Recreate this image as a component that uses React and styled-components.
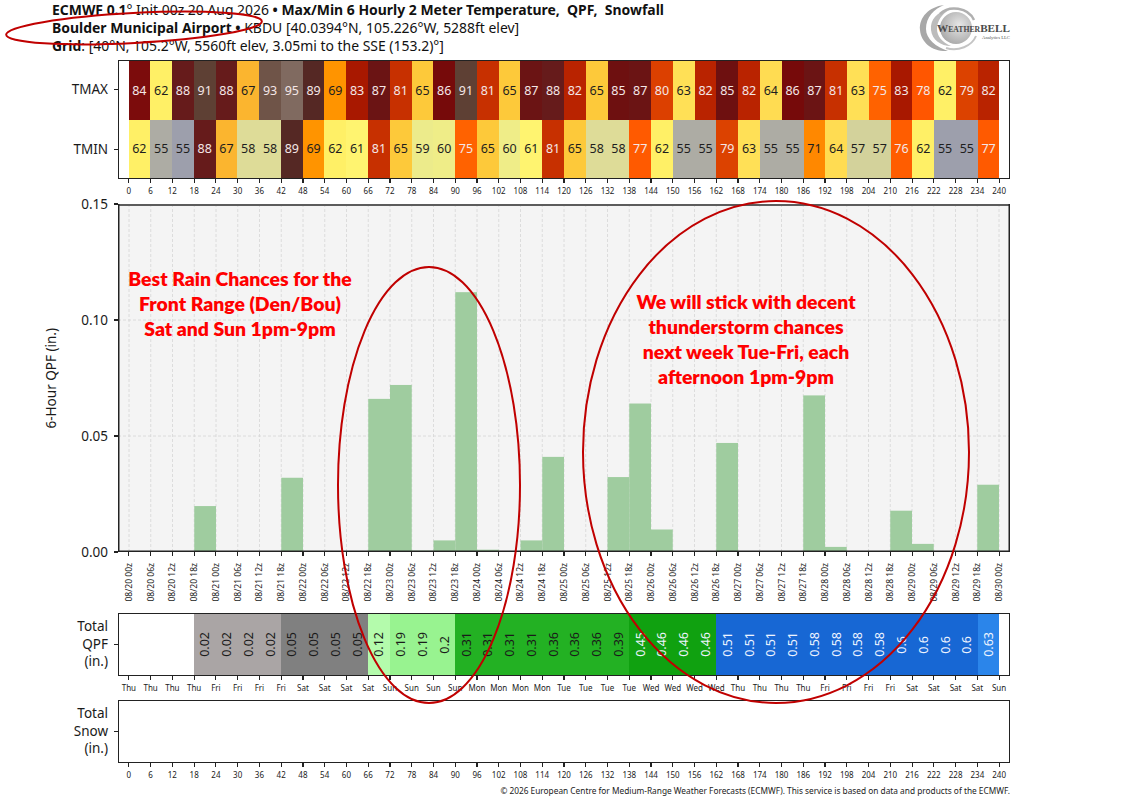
import React from "react";
import styled, { createGlobalStyle } from "styled-components";

const TICKS = Array.from({ length: 41 }, (_, i) => i * 6);
const DAYS = ["Thu", "Fri", "Sat", "Sun", "Mon", "Tue", "Wed"];

const TMAX = [84, 62, 88, 91, 88, 67, 93, 95, 89, 69, 83, 87, 81, 65, 86, 91, 81, 65, 87, 88, 82, 65, 85, 87, 80, 63, 82, 85, 82, 64, 86, 87, 81, 63, 75, 83, 78, 62, 79, 82];
const TMIN = [62, 55, 55, 88, 67, 58, 58, 89, 69, 62, 61, 81, 65, 59, 60, 75, 65, 60, 61, 81, 65, 58, 58, 77, 62, 55, 55, 79, 63, 55, 55, 71, 64, 57, 57, 76, 62, 55, 55, 77];
const COOL_55 = [2, 37, 38];

const QPF6 = { 3: 0.0198, 7: 0.032, 11: 0.066, 12: 0.072, 13: 0.0006, 14: 0.005, 15: 0.112, 16: 0.001, 18: 0.005, 19: 0.041, 22: 0.0323, 23: 0.064, 24: 0.0097, 27: 0.047, 31: 0.0675, 32: 0.0022, 35: 0.0178, 36: 0.0035, 39: 0.029 };

const TOTAL = [null, null, null, 0.02, 0.02, 0.02, 0.02, 0.05, 0.05, 0.05, 0.05, 0.12, 0.19, 0.19, 0.2, 0.31, 0.31, 0.31, 0.31, 0.36, 0.36, 0.36, 0.39, 0.45, 0.46, 0.46, 0.46, 0.51, 0.51, 0.51, 0.51, 0.58, 0.58, 0.58, 0.58, 0.6, 0.6, 0.6, 0.6, 0.63];

const TEMP_COLORS = {
  55: "#adaca4", 57: "#d3d29b", 58: "#dedc98", 59: "#eceb8b", 60: "#efed88", 61: "#fff470",
  62: "#fff066", 63: "#ffe056", 64: "#ffdc52", 65: "#fdc93a", 67: "#fbb52f", 69: "#ff9400",
  71: "#ff8800", 75: "#ff6200", 76: "#ff5d00", 77: "#ff5a00", 78: "#ff5600", 79: "#dc4200",
  80: "#dc4000", 81: "#c73000", 82: "#b92300", 83: "#a81800", 84: "#7c0c0c", 85: "#6e1010",
  86: "#760a0a", 87: "#6b1414", 88: "#661b1b", 89: "#552824", 91: "#5e4034", 93: "#6f5448", 95: "#806a60",
};

function tempColor(v, cool) {
  if (cool) return "#9d9fac";
  return TEMP_COLORS[v] || "#888";
}

function qpfColor(v) {
  if (v == null) return "#fff";
  if (v < 0.04) return "#aaa5a5";
  if (v < 0.1) return "#808080";
  if (v < 0.15) return "#b4fbac";
  if (v < 0.25) return "#98f390";
  if (v < 0.42) return "#23b123";
  if (v < 0.5) return "#10a110";
  if (v < 0.62) return "#1767d4";
  return "#2b85ea";
}

const pad = (n) => String(n).padStart(2, "0");
const dateLabel = (h) => `08/${pad(20 + Math.floor(h / 24))} ${pad(h % 24)}z`;

/* chart geometry */
const CW = 892;
const CH = 348;
const X = (h) => 11 + h * 3.625;
const Y = (v) => CH * (1 - v / 0.15);

const GlobalStyle = createGlobalStyle`
  html, body { margin: 0; padding: 0; background: #fff; }
  body { font-family: "Noto Sans", "DejaVu Sans", sans-serif; color: #1a1a1a; }
`;

export default function App() {
  return (
    <>
      <GlobalStyle />
      <Page>
        <Header>
          <TitleBlock>
            <div>
              <b>ECMWF 0.1</b>° Init 00z 20 Aug 2026 <b>• Max/Min 6 Hourly 2 Meter Temperature,&nbsp; QPF,&nbsp; Snowfall</b>
            </div>
            <div>
              <b>Boulder Municipal Airport •</b> KBDU [40.0394°N, 105.226°W, 5288ft elev]
            </div>
            <div>
              <b>Grid</b>: [40°N, 105.2°W, 5560ft elev, 3.05mi to the SSE (153.2)°]
            </div>
          </TitleBlock>
          <Logo />
        </Header>

        {/* ===== temperatures ===== */}
        <Row $top={3}>
          <Gutter $col>
            <SideLabel>TMAX<TickMark /></SideLabel>
            <SideLabel>TMIN<TickMark /></SideLabel>
          </Gutter>
          <StripBox $h={119} $rows={2}>
            {TMAX.map((v, i) => (
              <TempCell key={"x" + i} $bg={tempColor(v)} $light={v >= 75}>{v}</TempCell>
            ))}
            {TMIN.map((v, i) => (
              <TempCell key={"n" + i} $bg={tempColor(v, v === 55 && COOL_55.includes(i))} $light={v >= 75}>{v}</TempCell>
            ))}
          </StripBox>
        </Row>
        <TickRow $h={25}>
          {TICKS.map((h) => <TickCell key={h}>{h}</TickCell>)}
        </TickRow>

        {/* ===== 6 hour qpf ===== */}
        <Row>
          <Gutter>
            <YTitle>6-Hour QPF (in.)</YTitle>
            <YTicks>
              {["0.15", "0.10", "0.05", "0.00"].map((t) => (
                <YTick key={t}>{t}<TickMark /></YTick>
              ))}
            </YTicks>
          </Gutter>
          <ChartBox>
            <svg width={CW} height={CH} style={{ display: "block" }}>
              <rect x="0" y="0" width={CW} height={CH} fill="#f4f4f4" />
              {TICKS.map((h) => (
                <line key={h} x1={X(h)} x2={X(h)} y1="0" y2={CH} stroke="#d6d6d6" strokeWidth="0.8" strokeDasharray="3 2" />
              ))}
              {[0.05, 0.1].map((v) => (
                <line key={v} x1="0" x2={CW} y1={Y(v)} y2={Y(v)} stroke="#d6d6d6" strokeWidth="0.8" strokeDasharray="3 2" />
              ))}
              {Object.entries(QPF6).map(([i, v]) => (
                <rect key={i} x={X(i * 6)} y={Y(v)} width="21.75" height={CH - Y(v)} fill="#9fcc9f" />
              ))}
              <line x1="0" x2={CW} y1="1" y2="1" stroke="#5c5c5c" strokeWidth="2" />
              <line x1="0.75" x2="0.75" y1="0" y2={CH} stroke="#222" strokeWidth="1.5" />
              <line x1={CW - 0.75} x2={CW - 0.75} y1="0" y2={CH} stroke="#222" strokeWidth="1.5" />
              <line x1="0" x2={CW} y1={CH - 0.75} y2={CH - 0.75} stroke="#222" strokeWidth="1.5" />
            </svg>
            <Note $x={122} $y={62}>
              Best Rain Chances for the<br />Front Range (Den/Bou)<br />Sat and Sun 1pm-9pm
            </Note>
            <Note $x={628} $y={85}>
              We will stick with decent<br />thunderstorm chances<br />next week Tue-Fri, each<br />afternoon 1pm-9pm
            </Note>
          </ChartBox>
        </Row>
        <DateRow>
          {TICKS.map((h) => (
            <DateCell key={h}><span>{dateLabel(h)}</span></DateCell>
          ))}
        </DateRow>

        {/* ===== total qpf ===== */}
        <Row>
          <Gutter>
            <SideLabel>Total<br />QPF<br />(in.)<TickMark /></SideLabel>
          </Gutter>
          <StripBox $h={63} $rows={1}>
            {TOTAL.map((v, i) => (
              <QpfCell key={i} $bg={qpfColor(v)} $light={v != null && v >= 0.42}>
                {v != null && <span>{v}</span>}
              </QpfCell>
            ))}
          </StripBox>
        </Row>
        <TickRow $h={24}>
          {TICKS.map((h) => <TickCell key={h}>{DAYS[Math.floor(h / 24) % 7]}</TickCell>)}
        </TickRow>

        {/* ===== total snow ===== */}
        <Row>
          <Gutter>
            <SideLabel>Total<br />Snow<br />(in.)<TickMark /></SideLabel>
          </Gutter>
          <StripBox $h={63} $rows={1} />
        </Row>
        <TickRow $h={22}>
          {TICKS.map((h) => <TickCell key={h}>{h}</TickCell>)}
        </TickRow>
        <Credit>© 2026 European Centre for Medium-Range Weather Forecasts (ECMWF). This service is based on data and products of the ECMWF.</Credit>

        <Marks width="1125" height="802">
          <ellipse cx="134" cy="28" rx="128" ry="15" transform="rotate(-3 134 28)" />
          <ellipse cx="429" cy="485" rx="91" ry="218" />
          <ellipse cx="776" cy="452" rx="193" ry="251" />
        </Marks>
      </Page>
    </>
  );
}

function Logo() {
  return (
    <LogoBox width="96" height="52" viewBox="0 0 96 52">
      <defs>
        <radialGradient id="sw" cx="0.6" cy="0.4" r="0.7">
          <stop offset="0" stopColor="#e6e6e6" />
          <stop offset="1" stopColor="#a4a4a4" />
        </radialGradient>
      </defs>
      <path d="M28 3 C13 5 3 15 4 28 C5 41 17 50 32 49 C20 45 10 37 10 27 C10 15 18 7 28 3 Z" fill="#a8a8a8" />
      <path d="M33 8 C21 9 14 18 15 28 C16 38 25 44 35 44 C26 40 21 34 21 27 C21 19 26 12 33 8 Z" fill="#bcbcbc" />
      <circle cx="40" cy="26" r="16" fill="url(#sw)" />
      <path d="M24 12 C33 3 52 5 58 18" stroke="#b0b0b0" strokeWidth="2.5" fill="none" />
      <path d="M30 46 C42 50 56 44 60 34" stroke="#c4c4c4" strokeWidth="2" fill="none" />
      <text x="21" y="30" textLength="73" lengthAdjust="spacingAndGlyphs" fontFamily="'Liberation Serif', serif" fontSize="11" fontWeight="700" fill="#4a4a4a">
        W<tspan fontSize="7.6">EATHER</tspan><tspan fontSize="11">BELL</tspan>
      </text>
      <text x="66" y="37" textLength="28" lengthAdjust="spacingAndGlyphs" fontFamily="'Liberation Serif', serif" fontSize="4.3" fill="#555">Analytics LLC</text>
    </LogoBox>
  );
}

/* ================= STYLED COMPONENTS ================= */
const Page = styled.div`
  position: relative;
  width: 1125px;
  height: 802px;
  overflow: hidden;
`;

const Header = styled.header`
  display: flex;
  justify-content: space-between;
  align-items: flex-start;
  height: 57px;
  padding: 1px 113px 0 52px;
  box-sizing: border-box;
`;

const TitleBlock = styled.div`
  font-size: 13.95px;
  line-height: 18px;
  white-space: nowrap;
  color: #111;
`;

const LogoBox = styled.svg`
  display: block;
  margin-top: 1px;
`;

const Row = styled.div`
  display: flex;
  align-items: stretch;
  margin-top: ${(p) => p.$top || 0}px;
`;

const Gutter = styled.div`
  width: 118px;
  flex: none;
  display: flex;
  flex-direction: ${(p) => (p.$col ? "column" : "row")};
  justify-content: flex-end;
  align-items: stretch;
`;

const SideLabel = styled.div`
  flex: 1;
  display: flex;
  align-items: center;
  justify-content: flex-end;
  font-size: 13.5px;
  line-height: 17.5px;
  text-align: right;
  color: #1a1a1a;
`;

const TickMark = styled.span`
  display: inline-block;
  flex: none;
  width: 4px;
  height: 1.2px;
  margin-left: 6px;
  background: #222;
`;

const StripBox = styled.div`
  width: ${CW}px;
  height: ${(p) => p.$h}px;
  box-sizing: border-box;
  border: 1.5px solid #222;
  padding: 0 9.5px;
  background: #fff;
  display: grid;
  grid-template-columns: repeat(40, 1fr);
  grid-template-rows: repeat(${(p) => p.$rows}, 1fr);
`;

const TempCell = styled.div`
  background: ${(p) => p.$bg};
  color: ${(p) => (p.$light ? "#f4e6e6" : "#1e1e1e")};
  display: flex;
  align-items: center;
  justify-content: center;
  font-size: 12.5px;
`;

const QpfCell = styled.div`
  background: ${(p) => p.$bg};
  color: ${(p) => (p.$light ? "#eef4ff" : "#1a1a1a")};
  display: flex;
  align-items: center;
  justify-content: center;
  font-size: 12.5px;

  span {
    writing-mode: vertical-rl;
    transform: rotate(180deg);
  }
`;

const TickRow = styled.div`
  margin-left: 118px;
  width: ${CW}px;
  height: ${(p) => p.$h}px;
  display: grid;
  grid-template-columns: repeat(41, 1fr);
`;

const TickCell = styled.div`
  display: flex;
  flex-direction: column;
  align-items: center;
  font-size: 8px;
  line-height: 10px;
  color: #222;
  white-space: nowrap;

  &::before {
    content: "";
    width: 1.2px;
    height: 4px;
    margin-bottom: 3px;
    background: #222;
  }
`;

const YTitle = styled.div`
  writing-mode: vertical-rl;
  transform: rotate(180deg);
  align-self: center;
  font-size: 13.5px;
  width: 18px;
  margin-right: 6px;
  text-align: center;
  white-space: nowrap;
`;

const YTicks = styled.div`
  width: 52px;
  margin: -9px 0;
  display: flex;
  flex-direction: column;
  justify-content: space-between;
`;

const YTick = styled.div`
  height: 18px;
  display: flex;
  align-items: center;
  justify-content: flex-end;
  font-size: 13.5px;
`;

const ChartBox = styled.div`
  position: relative;
  width: ${CW}px;
  height: ${CH}px;
`;

const Note = styled.div`
  position: absolute;
  left: ${(p) => p.$x}px;
  top: ${(p) => p.$y}px;
  transform: translateX(-50%);
  white-space: nowrap;
  text-align: center;
  font-family: Lato, "Open Sans", sans-serif;
  font-weight: 800;
  font-size: 19.4px;
  line-height: 25px;
  color: #ff0000;
`;

const DateRow = styled.div`
  margin-left: 118px;
  width: ${CW}px;
  height: 61px;
  display: grid;
  grid-template-columns: repeat(41, 1fr);
`;

const DateCell = styled.div`
  display: flex;
  flex-direction: column;
  align-items: center;
  font-size: 8.5px;
  color: #222;

  &::before {
    content: "";
    width: 1.2px;
    height: 4px;
    margin-bottom: 7px;
    background: #222;
  }

  span {
    writing-mode: vertical-rl;
    transform: rotate(180deg);
    white-space: nowrap;
    line-height: 10px;
  }
`;

const Credit = styled.div`
  margin-left: 118px;
  width: ${CW}px;
  text-align: right;
  font-size: 8.3px;
  line-height: 12px;
  color: #222;
  white-space: nowrap;
`;

const Marks = styled.svg`
  position: absolute;
  left: 0;
  top: 0;
  pointer-events: none;

  ellipse {
    fill: none;
    stroke: #c00000;
    stroke-width: 2;
  }
`;
